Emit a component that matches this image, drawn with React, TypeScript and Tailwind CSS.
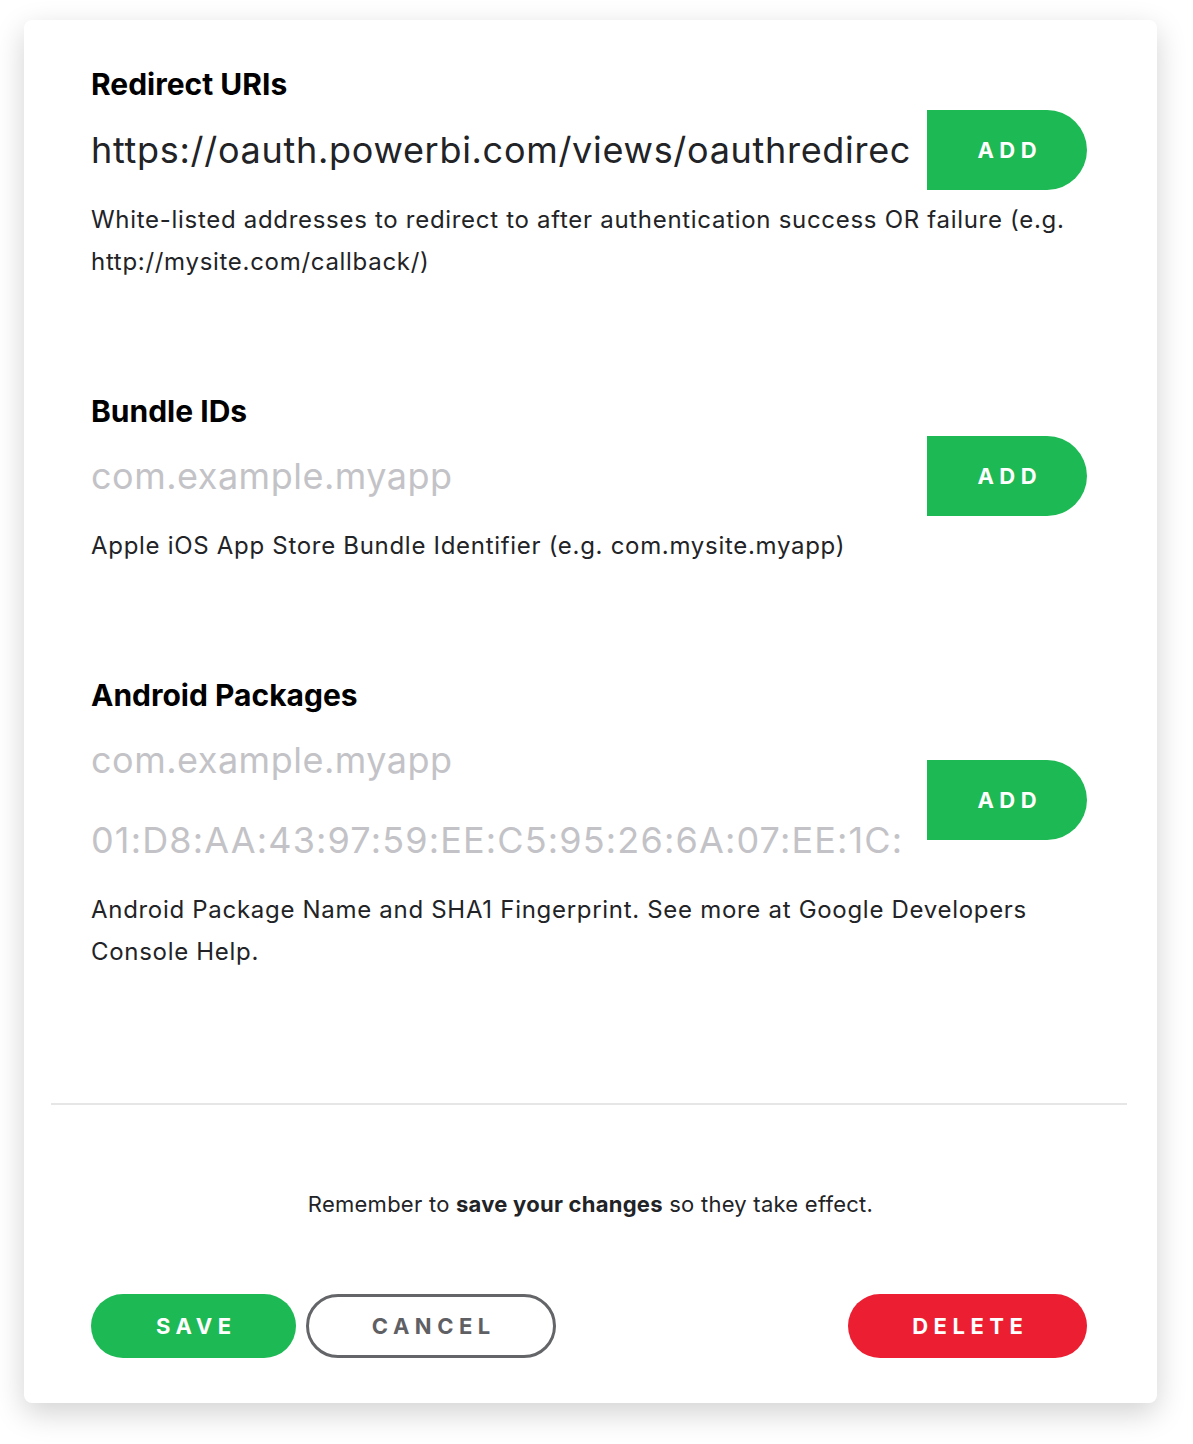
import React from "react";

const AddButton = () => (
  <button className="w-[160px] h-20 shrink-0 bg-[#1db954] rounded-r-[40px] text-white text-[22px] font-bold tracking-[0.25em] pl-[0.25em]">
    ADD
  </button>
);

const Field = ({
  value,
  placeholder,
  track = "tracking-[0.5px]",
}: {
  value?: string;
  placeholder?: string;
  track?: string;
}) => (
  <input
    readOnly
    value={value}
    placeholder={placeholder}
    className={`w-full h-20 bg-transparent text-[36px] text-[#222326] outline-none placeholder:text-[#c3c3c7] ${track}`}
  />
);

const Heading = ({ children }: { children: React.ReactNode }) => (
  <h2 className="text-[30px] leading-[36px] font-bold text-black">{children}</h2>
);

const Help = ({ children }: { children: React.ReactNode }) => (
  <p className="mt-[9px] text-[24px] leading-[42px] tracking-[0.7px] text-[#222326]">{children}</p>
);

export default function App() {
  return (
    <div className="min-h-[1444px] bg-white pt-5 pl-6 font-['Inter',sans-serif]">
      <div className="w-[1133px] bg-white rounded-lg shadow-[0_10px_30px_rgba(0,0,0,0.18)] pt-[46px] pb-[45px]">
        <div className="pl-[67px] pr-[70px]">
          <section>
            <Heading>Redirect URIs</Heading>
            <div className="mt-2 flex items-center gap-[17px]">
              <div className="flex-1 min-w-0">
                <Field
                  track="tracking-[0.7px]"
                  value="https://oauth.powerbi.com/views/oauthredirect.html"
                />
              </div>
              <AddButton />
            </div>
            <Help>
              White-listed addresses to redirect to after authentication success OR failure (e.g.
              http://mysite.com/callback/)
            </Help>
          </section>

          <section className="mt-[110px]">
            <Heading>Bundle IDs</Heading>
            <div className="mt-[7px] flex items-center gap-[17px]">
              <div className="flex-1 min-w-0">
                <Field placeholder="com.example.myapp" />
              </div>
              <AddButton />
            </div>
            <Help>Apple iOS App Store Bundle Identifier (e.g. com.mysite.myapp)</Help>
          </section>

          <section className="mt-[110px]">
            <Heading>Android Packages</Heading>
            <div className="mt-[7px] flex items-center gap-[17px]">
              <div className="flex-1 min-w-0">
                <Field placeholder="com.example.myapp" />
                <Field
                  track="tracking-[1.15px]"
                  placeholder="01:D8:AA:43:97:59:EE:C5:95:26:6A:07:EE:1C:"
                />
              </div>
              <AddButton />
            </div>
            <Help>
              Android Package Name and SHA1 Fingerprint. See more at Google Developers Console
              Help.
            </Help>
          </section>
        </div>

        <div className="mt-[130px] ml-[27px] mr-[30px] h-[2px] bg-[#e6e6e6]" />

        <p className="mt-[84px] text-center text-[22px] leading-[30px] tracking-[0.25px] text-[#222326]">
          Remember to <b className="font-bold">save your changes</b> so they take effect.
        </p>

        <div className="mt-[75px] pl-[67px] pr-[70px] flex items-center">
          <button className="w-[205px] h-16 rounded-full bg-[#1db954] text-white text-[22px] font-bold tracking-[0.25em] pl-[0.25em]">
            SAVE
          </button>
          <button className="ml-[10px] w-[250px] h-16 rounded-full border-[3px] border-[#646568] text-[#5f6064] text-[22px] font-bold tracking-[0.25em] pl-[0.25em]">
            CANCEL
          </button>
          <button className="ml-auto w-[239px] h-16 rounded-full bg-[#eb1e32] text-white text-[22px] font-bold tracking-[0.25em] pl-[0.25em]">
            DELETE
          </button>
        </div>
      </div>
    </div>
  );
}
